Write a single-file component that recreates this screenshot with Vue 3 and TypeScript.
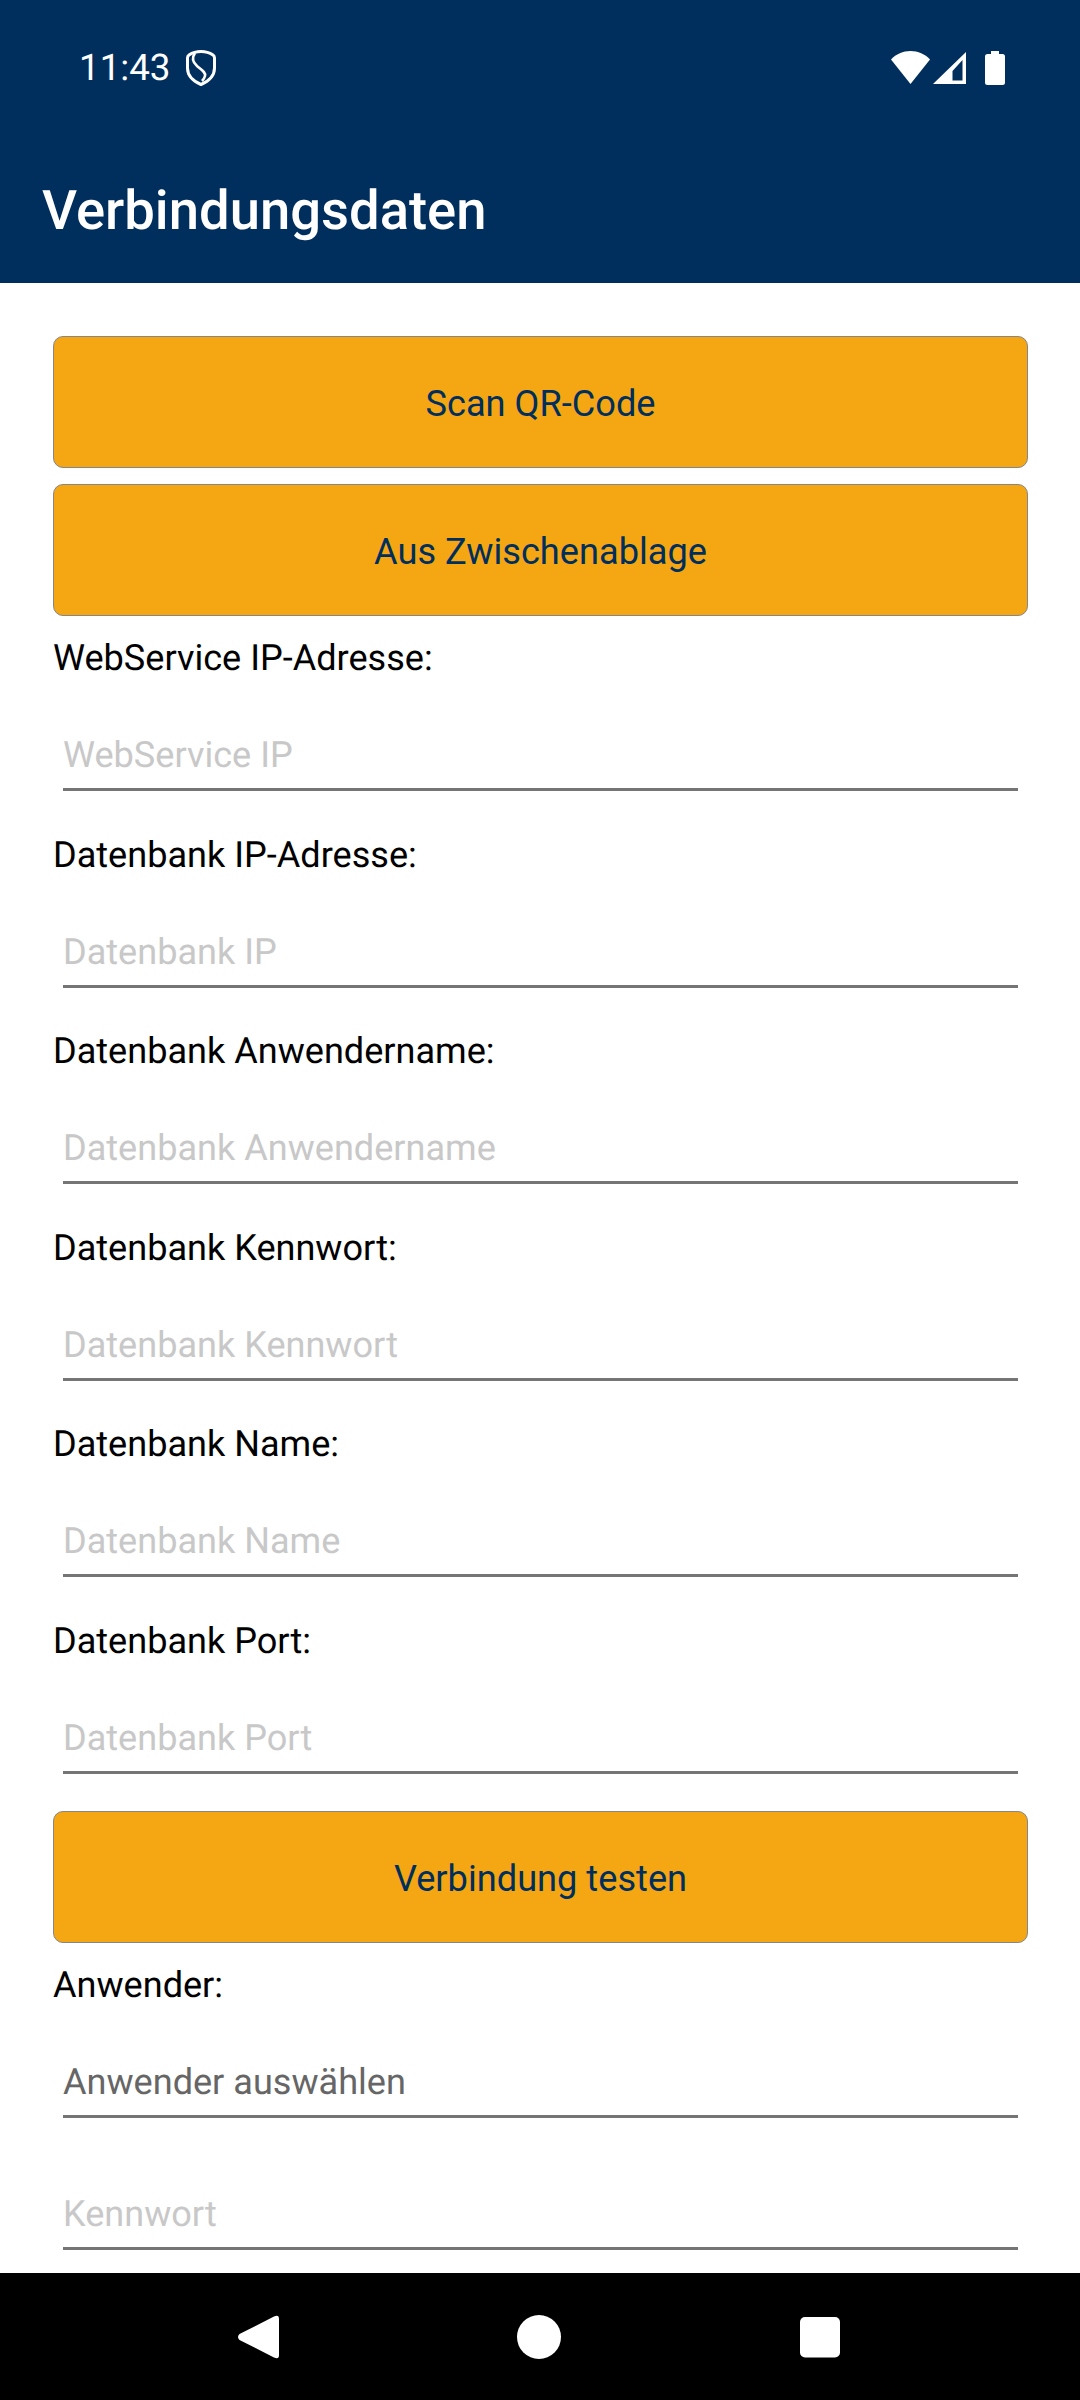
<script setup lang="ts">
interface Field {
  label: string
  placeholder: string
}

const connectionFields: Field[] = [
  { label: 'WebService IP-Adresse:', placeholder: 'WebService IP' },
  { label: 'Datenbank IP-Adresse:', placeholder: 'Datenbank IP' },
  { label: 'Datenbank Anwendername:', placeholder: 'Datenbank Anwendername' },
  { label: 'Datenbank Kennwort:', placeholder: 'Datenbank Kennwort' },
  { label: 'Datenbank Name:', placeholder: 'Datenbank Name' },
  { label: 'Datenbank Port:', placeholder: 'Datenbank Port' },
]
</script>

<template>
  <div class="screen">
    <header class="appbar">
      <div class="statusbar">
        <div class="status-left">
          <span class="time">11:43</span>
          <svg class="shield" width="30" height="36" viewBox="0 0 30 36" fill="none" stroke="#fff" stroke-width="3">
            <path d="M15 1.500 C19 1.500 24 3 27 5 Q28.500 6 28.500 8 V18 C28.500 26 22 31.500 15 34.500 C8 31.500 1.500 26 1.500 18 V8 Q1.500 6 3 5 C6 3 11 1.500 15 1.500 Z" />
            <path d="M9 3 C5.500 8 6.500 12 11 16 C15 19.500 20 22 19 26 C18.500 28 17.500 29.500 16 31" stroke-width="2.600" />
          </svg>
        </div>
        <div class="status-right">
          <svg width="39" height="34" viewBox="0 0 39 34">
            <path d="M0 8.5 C5 3 12 0 19.5 0 C27 0 34 3 39 8.5 L19.5 33 Z" fill="#fff" />
          </svg>
          <svg width="33" height="34" viewBox="0 0 33 34">
            <path fill-rule="evenodd" d="M33 1 V33 H0 Z M29.500 9 L19.500 20 V29.500 H29.500 Z" fill="#fff" />
          </svg>
          <svg class="battery" width="20" height="34" viewBox="0 0 20 34">
            <path d="M6 0 H14 V3 H17.500 Q20 3 20 5.500 V31.500 Q20 34 17.500 34 H2.500 Q0 34 0 31.500 V5.500 Q0 3 2.500 3 H6 Z" fill="#fff" />
          </svg>
        </div>
      </div>
      <h1 class="title">Verbindungsdaten</h1>
    </header>

    <main class="content">
      <button class="action" type="button">Scan QR-Code</button>
      <button class="action second" type="button">Aus Zwischenablage</button>

      <div v-for="field in connectionFields" :key="field.label" class="group">
        <div class="label">{{ field.label }}</div>
        <div class="input">{{ field.placeholder }}</div>
      </div>

      <button class="action test" type="button">Verbindung testen</button>

      <div class="group">
        <div class="label">Anwender:</div>
        <div class="input selected">Anwender auswählen</div>
      </div>
      <div class="input password">Kennwort</div>
    </main>

    <nav class="navbar">
      <svg width="44" height="44" viewBox="0 0 44 44">
        <path d="M38 1.500 Q43 -1 43 4 V40 Q43 45 38 42.500 L3.500 25 Q0.500 22 3.500 19 Z" fill="#fff" />
      </svg>
      <svg width="44" height="44" viewBox="0 0 44 44">
        <circle cx="22" cy="22" r="22" fill="#fff" />
      </svg>
      <svg width="44" height="44" viewBox="0 0 44 44">
        <rect x="2" y="2" width="40" height="40.500" rx="5" fill="#fff" />
      </svg>
    </nav>
  </div>
</template>

<style scoped>
.screen {
  width: 1080px;
  height: 2400px;
  display: flex;
  flex-direction: column;
  overflow: hidden;
  background: #fff;
  font-family: Roboto, "Liberation Sans", sans-serif;
  text-rendering: geometricPrecision;
}

.appbar {
  height: 283px;
  background: #002e5d;
  color: #fff;
}

.statusbar {
  height: 136px;
  display: flex;
  align-items: center;
  justify-content: space-between;
  padding: 0 75px 0 79px;
}

.status-left,
.status-right {
  display: flex;
  align-items: center;
}

.status-right {
  gap: 3px;
}

.battery {
  margin-left: 16px;
}

.time {
  font-size: 36.750px;
  line-height: 46px;
}

.shield {
  margin-left: 15px;
}

.title {
  margin: 0;
  padding-top: 41px;
  padding-left: 42px;
  font-size: 54.400px;
  line-height: 70px;
  font-weight: 500;
}

.content {
  flex: 1;
  padding: 53px 52px 0 53px;
}

.action {
  display: block;
  width: 100%;
  height: 132px;
  padding: 3px 0 0;
  border: 1.500px solid #85858a;
  border-radius: 10px;
  background: #f5a713;
  color: #002e5d;
  font-family: inherit;
  font-size: 36.200px;
}

.second {
  margin-top: 16px;
}

.test {
  margin-top: 37px;
}

.group {
  margin-top: 21px;
}

.group + .group {
  margin-top: 42.500px;
}

.label {
  height: 43px;
  font-size: 36.100px;
  line-height: 43px;
  color: #000;
}

.input {
  height: 88px;
  margin: 23px 10px 0;
  padding-top: 19px;
  border-bottom: 3px solid #757575;
  box-sizing: border-box;
  font-size: 36.100px;
  line-height: 66px;
  color: #c8c8c8;
}

.selected {
  color: #666;
}

.password {
  margin-top: 44px;
}

.navbar {
  height: 127px;
  flex: none;
  display: flex;
  align-items: center;
  justify-content: center;
  gap: 237px;
  padding-right: 2px;
  background: #000;
}
</style>

<style>
body {
  margin: 0;
}
</style>
